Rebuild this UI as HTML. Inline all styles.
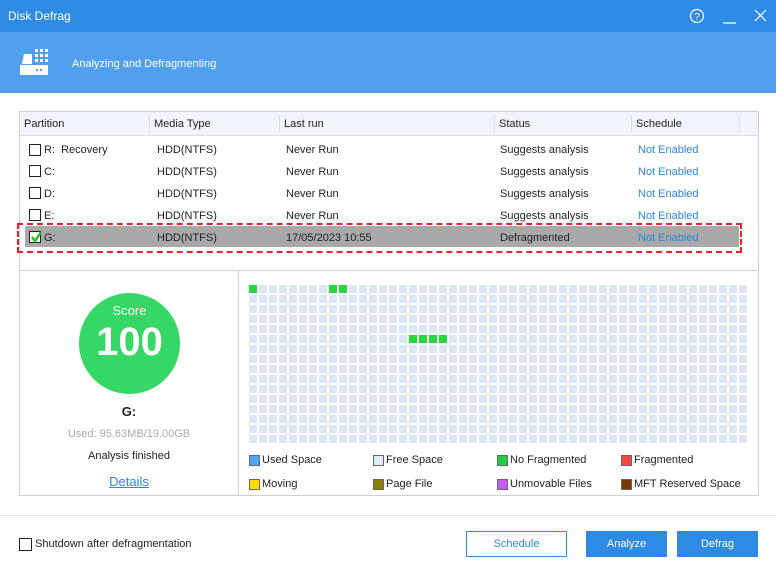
<!DOCTYPE html><html><head><style>
*{margin:0;padding:0;box-sizing:border-box}
body{width:776px;height:568px;background:#fff;font-family:"Liberation Sans",sans-serif;font-size:11px;color:#222;position:relative;overflow:hidden}
.a{position:absolute;white-space:nowrap}
.cb{position:absolute;width:12px;height:12px;border:1px solid #222;background:#fff}
.lg{position:absolute;width:11px;height:11px;border:1px solid #666}
</style></head><body>
<div class="a" style="left:0;top:0;width:776px;height:32px;background:#2e8be4"></div>
<div class="a" style="left:8px;top:9px;color:#fff;font-size:12px">Disk Defrag</div>
<svg class="a" style="left:688px;top:8px" width="80" height="18" viewBox="0 0 80 18"><circle cx="9" cy="8" r="6.5" fill="none" stroke="#fff" stroke-width="1.2"/><text x="9" y="12" fill="#fff" font-size="10" text-anchor="middle" font-family="Liberation Sans">?</text><line x1="35" y1="15" x2="48" y2="15" stroke="#fff" stroke-width="1.3"/><path d="M67 2L78 13M78 2L67 13" stroke="#fff" stroke-width="1.2"/></svg>
<div class="a" style="left:0;top:32px;width:776px;height:61px;background:#50a0ee"></div>
<svg class="a" style="left:19px;top:48px" width="32" height="28" viewBox="0 0 32 28"><g fill="#fff"><rect x="16" y="1" width="3" height="3"/><rect x="21" y="1" width="3" height="3"/><rect x="26" y="1" width="3" height="3"/><rect x="16" y="6" width="3" height="3"/><rect x="21" y="6" width="3" height="3"/><rect x="26" y="6" width="3" height="3"/><rect x="16" y="11" width="3" height="3"/><rect x="21" y="11" width="3" height="3"/><rect x="26" y="11" width="3" height="3"/><path d="M5 6h8v10H3z"/><rect x="1" y="17" width="28" height="10"/></g><rect x="17" y="21" width="2" height="2" fill="#50a0ee"/><rect x="21" y="21" width="2" height="2" fill="#50a0ee"/></svg>
<div class="a" style="left:72px;top:58px;color:#fff">Analyzing and Defragmenting</div>

<div class="a" style="left:19px;top:111px;width:740px;height:160px;border:1px solid #d0d0d0;border-bottom:none"></div>
<div class="a" style="left:20px;top:112px;width:738px;height:24px;background:#f1f4fa;border-bottom:1px solid #dde"></div>
<div class="a" style="left:149px;top:115px;width:1px;height:18px;background:#dde"></div>
<div class="a" style="left:279px;top:115px;width:1px;height:18px;background:#dde"></div>
<div class="a" style="left:494px;top:115px;width:1px;height:18px;background:#dde"></div>
<div class="a" style="left:631px;top:115px;width:1px;height:18px;background:#dde"></div>
<div class="a" style="left:739px;top:115px;width:1px;height:18px;background:#dde"></div>
<div class="a" style="left:24px;top:118px">Partition</div>
<div class="a" style="left:154px;top:118px">Media Type</div>
<div class="a" style="left:284px;top:118px">Last run</div>
<div class="a" style="left:499px;top:118px">Status</div>
<div class="a" style="left:636px;top:118px">Schedule</div>

<div class="a" style="left:25px;top:226px;width:714px;height:21px;background:#a9a9a9"></div>
<div class="a" style="left:17px;top:223px;width:725px;height:30px;border:2px dashed #e8202a"></div>

<div class="cb" style="left:29px;top:144px"></div><div class="a" style="left:44px;top:144px">R:&nbsp; Recovery</div>
<div class="cb" style="left:29px;top:165px"></div><div class="a" style="left:44px;top:166px">C:</div>
<div class="cb" style="left:29px;top:187px"></div><div class="a" style="left:44px;top:188px">D:</div>
<div class="cb" style="left:29px;top:209px"></div><div class="a" style="left:44px;top:210px">E:</div>
<div class="cb" style="left:29px;top:231px"></div><svg class="a" style="left:30px;top:231px" width="12" height="12"><path d="M2 6l3 4 6-9" stroke="#22c022" stroke-width="2.4" fill="none"/></svg><div class="a" style="left:44px;top:232px">G:</div>
<div class="a" style="left:157px;top:139px;line-height:22px">HDD(NTFS)<br>HDD(NTFS)<br>HDD(NTFS)<br>HDD(NTFS)<br>HDD(NTFS)</div>
<div class="a" style="left:286px;top:139px;line-height:22px">Never Run<br>Never Run<br>Never Run<br>Never Run<br>17/05/2023 10:55</div>
<div class="a" style="left:500px;top:139px;line-height:22px">Suggests analysis<br>Suggests analysis<br>Suggests analysis<br>Suggests analysis<br>Defragmented</div>
<div class="a" style="left:638px;top:139px;line-height:22px;color:#2e86e0">Not Enabled<br>Not Enabled<br>Not Enabled<br>Not Enabled<br>Not Enabled</div>

<div class="a" style="left:19px;top:270px;width:740px;height:226px;border:1px solid #d0d0d0"></div>
<div class="a" style="left:238px;top:270px;width:1px;height:226px;background:#d0d0d0"></div>
<div class="a" style="left:79px;top:293px;width:101px;height:101px;border-radius:50%;background:#35d765"></div>
<div class="a" style="left:79px;top:303px;width:101px;text-align:center;color:#fff;font-size:13px">Score</div>
<div class="a" style="left:79px;top:320px;width:101px;text-align:center;color:#fff;font-size:40px;font-weight:bold">100</div>
<div class="a" style="left:19px;top:404px;width:220px;text-align:center;font-weight:bold;font-size:13px">G:</div>
<div class="a" style="left:19px;top:428px;width:220px;text-align:center;color:#aaa">Used: 95.63MB/19.00GB</div>
<div class="a" style="left:19px;top:450px;width:220px;text-align:center">Analysis finished</div>
<div class="a" style="left:19px;top:474px;width:220px;text-align:center;color:#2e86e0;text-decoration:underline;font-size:13px">Details</div>

<svg class="a" style="left:249px;top:285px" width="500" height="160">
<defs><pattern id="p" width="10" height="10" patternUnits="userSpaceOnUse"><rect width="8" height="8" fill="#dde6f3"/></pattern></defs>
<rect width="500" height="160" fill="url(#p)"/>
<g fill="#25d83c"><rect x="0" y="0" width="8" height="8"/><rect x="80" y="0" width="8" height="8"/><rect x="90" y="0" width="8" height="8"/><rect x="160" y="50" width="8" height="8"/><rect x="170" y="50" width="8" height="8"/><rect x="180" y="50" width="8" height="8"/><rect x="190" y="50" width="8" height="8"/></g></svg>

<div class="lg" style="left:249px;top:455px;background:#4ea6f5"></div><div class="a" style="left:262px;top:454px">Used Space</div>
<div class="lg" style="left:373px;top:455px;background:#e4ebf5"></div><div class="a" style="left:386px;top:454px">Free Space</div>
<div class="lg" style="left:497px;top:455px;background:#22cc44"></div><div class="a" style="left:510px;top:454px">No Fragmented</div>
<div class="lg" style="left:621px;top:455px;background:#f54646"></div><div class="a" style="left:634px;top:454px">Fragmented</div>
<div class="lg" style="left:249px;top:479px;background:#ffdd00"></div><div class="a" style="left:262px;top:478px">Moving</div>
<div class="lg" style="left:373px;top:479px;background:#8a8000"></div><div class="a" style="left:386px;top:478px">Page File</div>
<div class="lg" style="left:497px;top:479px;background:#c55cf0"></div><div class="a" style="left:510px;top:478px">Unmovable Files</div>
<div class="lg" style="left:621px;top:479px;background:#7a3a08"></div><div class="a" style="left:634px;top:478px">MFT Reserved Space</div>

<div class="a" style="left:0;top:515px;width:776px;height:1px;background:#e4e4e4"></div>
<div class="cb" style="left:19px;top:538px;width:13px;height:13px"></div>
<div class="a" style="left:35px;top:538px">Shutdown after defragmentation</div>
<div class="a" style="left:466px;top:531px;width:101px;height:26px;border:1px solid #2e86e0;color:#2e86e0;text-align:center;line-height:24px">Schedule</div>
<div class="a" style="left:586px;top:531px;width:81px;height:26px;background:#2e8be4;color:#fff;text-align:center;line-height:26px">Analyze</div>
<div class="a" style="left:677px;top:531px;width:81px;height:26px;background:#2e8be4;color:#fff;text-align:center;line-height:26px">Defrag</div>
</body></html>
